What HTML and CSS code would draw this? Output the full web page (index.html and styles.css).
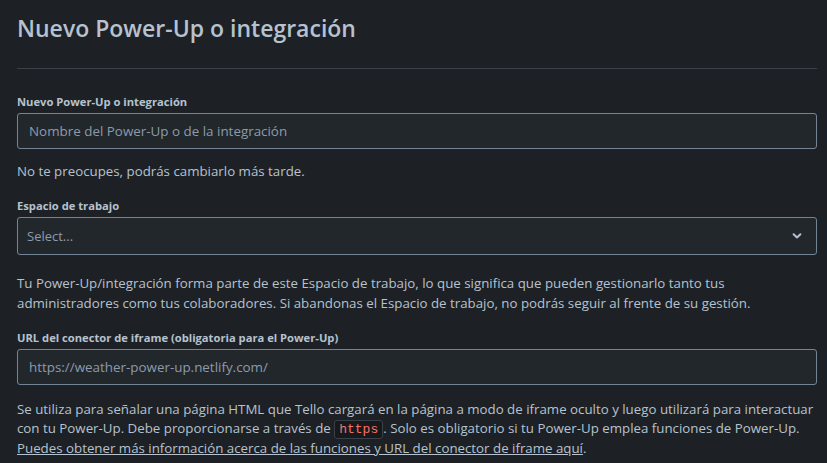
FILE: index.html
```html
<!DOCTYPE html>
<html lang="es">
<head>
<meta charset="utf-8">
<title>Nuevo Power-Up o integración</title>
<link rel="stylesheet" href="styles.css">
</head>
<body>
<main class="page">
  <h1 class="title">Nuevo Power-Up o integración</h1>
  <hr class="divider">
  <form class="form">
    <div class="field">
      <label class="label" for="name">Nuevo Power-Up o integración</label>
      <input class="input" id="name" type="text" placeholder="Nombre del Power-Up o de la integración">
      <p class="help help-short">No te preocupes, podrás cambiarlo más tarde.</p>
    </div>
    <div class="field">
      <label class="label" for="ws">Espacio de trabajo</label>
      <div class="select" id="ws">
        <span class="select-value">Select...</span>
        <svg class="chevron" width="12" height="12" viewBox="0 0 12 12"><path d="M2.6 4.3 L6 7.5 L9.4 4.3" fill="none" stroke="#b6c2cf" stroke-width="2" stroke-linecap="round" stroke-linejoin="round"/></svg>
      </div>
      <p class="help help-ws">Tu Power-Up/integración forma parte de este Espacio de trabajo, lo que significa que pueden gestionarlo tanto tus<br>administradores como tus colaboradores. Si abandonas el Espacio de trabajo, no podrás seguir al frente de su gestión.</p>
    </div>
    <div class="field">
      <label class="label" for="url">URL del conector de iframe (obligatoria para el Power-Up)</label>
      <input class="input" id="url" type="text" placeholder="https://weather-power-up.netlify.com/">
      <p class="help help-url">Se utiliza para señalar una página HTML que Tello cargará en la página a modo de iframe oculto y luego utilizará para interactuar<br>con tu Power-Up. Debe proporcionarse a través de <code class="code">https</code>. Solo es obligatorio si tu Power-Up emplea funciones de Power-Up.<br><a class="link" href="#">Puedes obtener más información acerca de las funciones y URL del conector de iframe aquí</a>.</p>
    </div>
  </form>
</main>
</body>
</html>
```
FILE: styles.css
```css
* { box-sizing: border-box; }
html, body { margin: 0; padding: 0; }
body {
  background: #1d2125;
  color: #b6c2cf;
  font-family: "Open Sans", "Noto Sans", "Liberation Sans", sans-serif;
  font-size: 13.3px;
}
.page {
  width: 800px;
  margin-left: 17px;
  padding-top: 13px;
}
.title {
  margin: 0;
  font-size: 23px;
  line-height: 30px;
  font-weight: 600;
  color: #b6c2cf;
}
.divider {
  margin: 25px 0 0 0;
  border: 0;
  height: 1px;
  background: #38414a;
}
.form {
  display: flex;
  flex-direction: column;
  padding-top: 25px;
}
.field {
  display: flex;
  flex-direction: column;
}
.label {
  font-size: 11.2px;
  font-weight: 700;
  line-height: 16px;
  margin-bottom: 3px;
  color: #b6c2cf;
}
.input, .select {
  width: 100%;
  height: 36px;
  background: #22272b;
  border: 1px solid #738496;
  border-radius: 3px;
  padding: 0 11px;
  font-family: inherit;
  font-size: 13.4px;
  color: #b6c2cf;
  outline: none;
}
.input::placeholder { color: #8c9bab; }
.select {
  height: 38px;
  display: flex;
  align-items: center;
  justify-content: space-between;
  padding: 0 13px 0 9px;
  font-size: 13px;
}
.select-value { color: #8c9bab; }
.chevron { display: block; }
.help {
  margin: 12px 0 16px 0;
  line-height: 20px;
  color: #b6c2cf;
  white-space: nowrap;
}
.help-short { margin-bottom: 17px; }
.help-ws { margin-top: 18px; margin-bottom: 17px; }
.help-url { margin-top: 15px; line-height: 18.5px; }
.code {
  font-family: "Liberation Mono", "DejaVu Sans Mono", monospace;
  font-size: 13px;
  color: #f87168;
  background: #161a1d;
  border: 1px solid #38414a;
  border-radius: 3px;
  padding: 1px 4px;
}
.link {
  color: #b6c2cf;
  text-decoration: underline;
}
```
